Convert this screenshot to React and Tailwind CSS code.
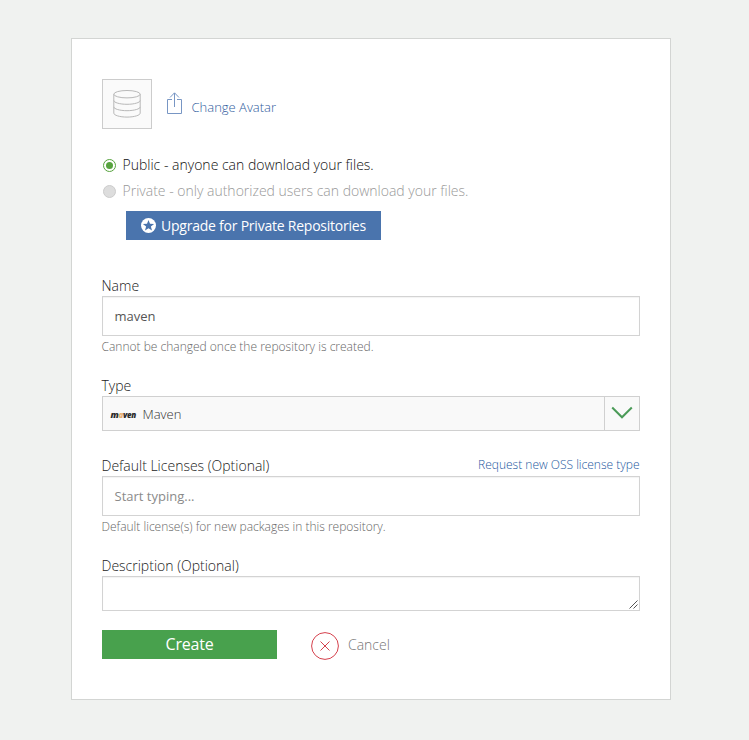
import React from 'react';

function Field({ label, action, hint, children }) {
  return (
    <div className="flex flex-col">
      <div className="flex h-5 items-center justify-between whitespace-nowrap">
        <label className="-ml-[0.5px] text-[14px] leading-5 text-[#222]">{label}</label>
        {action}
      </div>
      {children}
      {hint && <p className="-ml-[0.5px] mt-px h-5 text-[12px] leading-5 text-[#666]">{hint}</p>}
    </div>
  );
}

function DatabaseIcon() {
  return (
    <svg width="28" height="28" viewBox="0 0 28 28" fill="none" stroke="#b8b8b8" strokeWidth="1">
      <ellipse cx="14" cy="4.2" rx="13.2" ry="3.7" />
      <path d="M.8 4.2v19c0 2 5.900 3.900 13.200 3.900s13.200-1.900 13.200-3.900v-19" />
      <path d="M.8 10.500c0 2 5.900 3.800 13.200 3.800s13.200-1.800 13.200-3.800M.8 16.900c0 2 5.900 3.800 13.200 3.800s13.200-1.800 13.200-3.800" />
    </svg>
  );
}

function ShareIcon() {
  return (
    <svg width="15" height="22" viewBox="0 0 15 22" fill="none" stroke="#7896c4" strokeWidth="1">
      <path d="M5 7.500H.5v14h14v-14H10M7.500 15V1M3 5.500l4.500-4.700L12 5.500" />
    </svg>
  );
}

function MavenLogo() {
  return (
    <span className="-ml-[0.5px] w-[26.5px] whitespace-nowrap font-['Open_Sans',sans-serif] text-[8px] font-extrabold italic leading-none tracking-[-0.35px] text-[#2b2b2b]">
      <span className="text-[9px]">m</span>
      <span className="text-[#e8b070]">a</span>ven
    </span>
  );
}

export default function App() {
  return (
    <main className="flex h-[740px] w-[749px] items-start bg-[#f0f2f0] pl-[71px] pt-[38px] font-['Open_Sans',sans-serif] font-light">
      <section className="flex h-[662px] w-[600px] flex-col border border-[#d3d5d3] bg-white px-[30px] pt-10">
        <div className="flex h-[50px]">
          <div className="flex size-[50px] items-center justify-center border border-[#ccc] bg-[#fafafa]">
            <DatabaseIcon />
          </div>
          <a className="flex text-[#2f5c9e]">
            <span className="ml-[15px] mt-[13px]"><ShareIcon /></span>
            <span className="ml-[9.5px] mt-[18px] text-[13px] leading-5">Change Avatar</span>
          </a>
        </div>

        <div className="mt-[23px] flex flex-col text-[14px]">
          <label className="flex h-[26px] items-center text-[#111]">
            <span className="ml-px flex size-[13px] items-center justify-center rounded-full border border-[#57a33e] bg-white">
              <span className="size-[7px] rounded-full bg-[#57a33e]" />
            </span>
            <span className="ml-[6.5px] pb-[2px]">Public - anyone can download your files.</span>
          </label>
          <label className="flex h-[26px] items-center text-[#999]">
            <span className="ml-px size-[13px] rounded-full border border-[#ccc] bg-[#ddd]" />
            <span className="ml-[6.5px] pb-[2px]">Private - only authorized users can download your files.</span>
          </label>
        </div>

        <button className="ml-6 mt-[7px] flex h-[29px] w-[255px] items-center bg-[#4a74ad] pl-[15px] text-[14px] font-normal text-white">
          <svg width="15" height="15" viewBox="0 0 15 15">
            <circle cx="7.500" cy="7.500" r="7.500" fill="#fff" />
            <path fill="#4a74ad" d="m7.500 1.900 1.500 3.900 4.100.2-3.200 2.600 1.100 4-3.500-2.300L4 12.600l1.100-4L1.900 6l4.100-.2z" />
          </svg>
          <span className="ml-[5px] whitespace-nowrap tracking-[-0.23px]">Upgrade for Private Repositories</span>
        </button>

        <div className="mt-9 flex flex-col gap-[19px]">
          <Field label="Name" hint="Cannot be changed once the repository is created.">
            <div className="flex h-10 items-center border border-[#d3d3d3] pl-[11.5px] pt-[2px] text-[13px] font-normal text-[#555] shadow-[inset_0_1px_1px_rgba(0,0,0,0.05)]">
              maven
            </div>
          </Field>

          <Field label="Type">
            <div className="mb-[6px] flex h-[35px] border border-[#d0d0d0] bg-[#f9f9f9]">
              <div className="flex flex-1 items-center pl-2 pt-[2px]">
                <MavenLogo />
                <span className="ml-[5.5px] text-[13px] text-[#333]">Maven</span>
              </div>
              <div className="flex w-[36px] justify-center border-l border-[#d0d0d0] pr-px pt-[9px] -ml-px mr-0 max-w-[35px]">
                <svg width="22" height="13" viewBox="0 0 22 13" fill="none" stroke="#4b9b58" strokeWidth="2">
                  <path d="m1.200 1.500 9.800 9.800 9.800-9.800" />
                </svg>
              </div>
            </div>
          </Field>

          <Field
            label="Default Licenses (Optional)"
            hint="Default license(s) for new packages in this repository."
            action={<a className="-mt-[2px] mr-[0.5px] text-[12px] text-[#2458a0]">Request new OSS license type</a>}
          >
            <div className="flex h-10 items-center border border-[#d3d3d3] pl-[11.5px] pt-[2px] text-[13px] font-normal text-[#8a8a8a] shadow-[inset_0_1px_1px_rgba(0,0,0,0.05)]">
              Start typing...
            </div>
          </Field>

          <Field label="Description (Optional)">
            <div className="flex h-[35px] items-end justify-end border border-[#d3d3d3] pb-px pr-px shadow-[inset_0_1px_1px_rgba(0,0,0,0.05)]">
              <svg width="9" height="9" viewBox="0 0 9 9" stroke="#555" strokeWidth="1">
                <path d="M.5 8.500l8-8M4.500 8.500l4-4" />
              </svg>
            </div>
          </Field>
        </div>

        <div className="mt-[19px] flex h-[31px]">
          <button className="h-[29px] w-[175px] bg-[#48a14d] text-[16px] font-normal leading-[29px] tracking-[-0.2px] text-white">Create</button>
          <button className="ml-[34px] flex text-[14px] text-[#777]">
            <svg className="mt-[2px]" width="28" height="28" viewBox="0 0 28 28" fill="none" stroke="#d5404c">
              <circle cx="14" cy="14" r="13.400" />
              <path d="m9.500 9.500 9 9m0-9-9 9" />
            </svg>
            <span className="ml-[9px] mt-[5px] leading-5">Cancel</span>
          </button>
        </div>
      </section>
    </main>
  );
}
